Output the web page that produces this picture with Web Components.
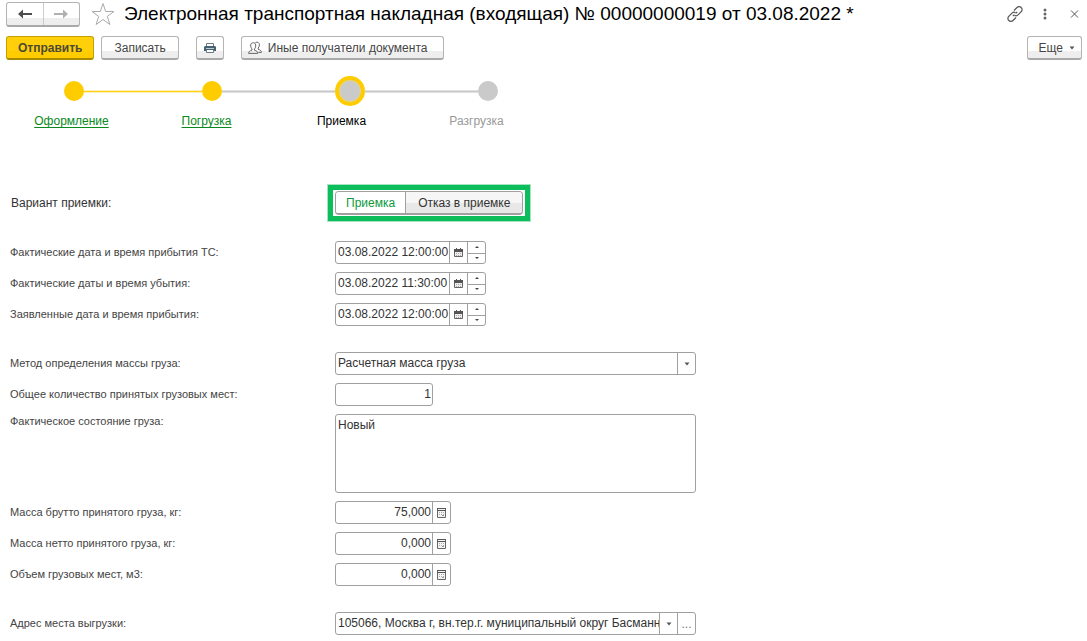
<!DOCTYPE html>
<html lang="ru">
<head>
<meta charset="utf-8">
<meta name="viewport" content="width=device-width, initial-scale=1">
<title>Электронная транспортная накладная</title>
<style>
  body { margin: 0; background: #fff; color: #333; font-family: "Liberation Sans", Arial, sans-serif; font-size: 12px; }
</style>
</head>
<body>
<waybill-page></waybill-page>
<script>
const define = (name, css, html) => {
  customElements.define(name, class extends HTMLElement {
    constructor() {
      super();
      const t = document.createElement('template');
      t.innerHTML = `<style>*{box-sizing:border-box}${css}</style>${typeof html === 'function' ? html(this) : html}`;
      this.attachShadow({ mode: 'open' }).append(t.content.cloneNode(true));
    }
  });
};

/* Toolbar button */
define('tool-button', `
  :host { display: block; }
  button { display: flex; align-items: center; justify-content: center; gap: 6px; height: 24px; min-width: 28px; padding: 0 12px;
    font: inherit; line-height: 20px; color: #444; white-space: nowrap; border: 1px solid #b4b4b4; border-bottom: 2px solid #a9a9a9;
    border-radius: 3px; background: linear-gradient(#fff 66%, #eee 66%); }
  :host([primary]) button { padding: 0 11px; font-weight: bold; color: #4c4a33; border-color: #c4a000; border-bottom-color: #a88a00; background: linear-gradient(#ffcf0a 66%, #fc0 66%); }
  :host([icon]) button { padding: 0 6px; }
  :host([lead]) button { padding: 0 16px 0 6px; }
  :host([menu]) button { padding: 0 6px 0 11px; }
`, el => `<button type="button" ${el.hasAttribute('name') ? `aria-label="${el.getAttribute('name')}"` : ''}><slot></slot></button>`);

/* Window caption: history buttons, star, title, window actions */
define('title-bar', `
  :host { display: flex; align-items: center; height: 28px; padding: 0 5px 0 6px; }
  .nav { display: flex; width: 74px; height: 25px; border: 1px solid #b4b4b4; border-bottom: 2px solid #a9a9a9; border-radius: 3px; background: linear-gradient(#fff 66%, #eee 66%); }
  button { display: grid; place-items: center; padding: 0; border: 0; background: none; color: #4d4d4d; }
  .nav button { flex: 1; }
  .nav button + button { border-left: 1px solid #ccc; color: #b0b0b0; }
  .star { margin: 0 9px 0 11px; }
  h1 { flex: 1; margin: 0; font-size: 19px; line-height: 24px; font-weight: normal; color: #000; white-space: nowrap; }
  .actions { display: flex; align-items: center; gap: 14px; }
`, `
  <div class="nav">
    <button type="button" aria-label="Назад"><svg width="16" height="12" viewBox="0 0 16 12"><path d="M1 6 6 1.500V5h9v2H6v3.500z" fill="currentColor"/></svg></button>
    <button type="button" aria-label="Вперед"><svg width="16" height="12" viewBox="0 0 16 12"><path d="M15 6 10 1.500V5H1v2h9v3.500z" fill="currentColor"/></svg></button>
  </div>
  <button class="star" type="button" aria-label="В избранное"><svg width="24" height="24" viewBox="0 0 24 24"><path d="m12 1.500 2.700 8h8.200l-6.600 4.900 2.600 8.100-6.900-5-6.900 5 2.600-8.100L1.100 9.500h8.200z" fill="none" stroke="#aaa"/></svg></button>
  <h1><slot></slot></h1>
  <div class="actions">
    <button type="button" aria-label="Ссылка"><svg width="18" height="18" viewBox="0 0 18 18" fill="none" stroke="#555" stroke-width="1.200"><path d="m8 5.500 3-3a2.900 2.900 0 0 1 4.200 0 2.900 2.900 0 0 1 0 4.200l-3.200 3.200a2.900 2.900 0 0 1-3.400.5M10 12.500l-3 3a2.900 2.900 0 0 1-4.200 0 2.900 2.900 0 0 1 0-4.200l3.200-3.200a2.900 2.900 0 0 1 3.400-.5M6.800 11.200l1.500-1.500M9.700 8.300l1.500-1.500"/></svg></button>
    <button type="button" aria-label="Меню"><svg width="14" height="14" viewBox="0 0 14 14" fill="#666"><circle cx="7" cy="3" r="1.500"/><circle cx="7" cy="7" r="1.500"/><circle cx="7" cy="11" r="1.500"/></svg></button>
    <button type="button" aria-label="Закрыть"><svg width="16" height="14" viewBox="0 0 16 14"><path d="m5 3.500 7 7m0-7-7 7" stroke="#555" fill="none"/></svg></button>
  </div>
`);

/* Stage tracker */
define('stage-track', `
  :host { display: block; }
  .marks { display: grid; grid-template-columns: repeat(4, 138px); align-items: center; margin: 0 0 0 5px; height: 30px; }
  .mark { display: grid; grid-template-columns: 1fr auto 1fr; align-items: center; }
  i { width: 20px; height: 20px; border-radius: 50%; background: #cacaca; }
  .done i { background: #fc0; }
  .current i { width: 30px; height: 30px; border: 4px solid #fc0; box-shadow: inset 0 0 0 1px #e6d48a; }
  .mark::before, .mark::after { content: ""; height: 3px; background: linear-gradient(#e0e0e0 33%, #c8c8c8 33% 66%, #e0e0e0 66%); }
  .first::before, .last::after { visibility: hidden; }
  .first::after, .second::before { background: linear-gradient(#fff0b3 33%, #ffcf1a 33% 66%, #fff0b3 66%); }
  ol { display: grid; grid-template-columns: repeat(4, 135px); margin: 7px 0 0 4px; padding: 0; list-style: none; text-align: center; line-height: 16px; }
  a { color: #0a8a1c; text-decoration: underline; text-underline-offset: 2px; }
  .now { color: #000; } .later { color: #999; }
`, `
  <div class="marks" aria-hidden="true">
    <div class="mark done first"><i></i></div><div class="mark done second"><i></i></div>
    <div class="mark current"><i></i></div><div class="mark last"><i></i></div>
  </div>
  <ol><li><a href="#draft">Оформление</a></li><li><a href="#loading">Погрузка</a></li><li class="now" aria-current="step">Приемка</li><li class="later">Разгрузка</li></ol>
`);

/* Acceptance switch with highlighted frame */
define('variant-switch', `
  :host { display: block; }
  fieldset { display: grid; grid-template-columns: 317px auto; justify-content: start; align-items: center; margin: 0; padding: 0 0 0 10px; border: 0; }
  .caption { line-height: 16px; padding-left: 1px; }
  .frame { border: 6px solid #0bbd5b; outline: 1px solid #a5e5c1; outline-offset: -1px; padding: 1px 2px; }
  .seg { display: flex; height: 24px; border: 1px solid #a0a0a0; border-bottom-width: 2px; border-radius: 4px; overflow: hidden; }
  label { display: grid; place-items: center; padding: 0 12px; background: linear-gradient(#f6f6f6 50%, #e8e8e8 50%); white-space: nowrap; }
  label + label { border-left: 1px solid #a0a0a0; }
  label:has(:checked) { background: #fff; color: #0a9a3c; padding: 0 10px; }
  input { appearance: none; position: absolute; width: 1px; height: 1px; margin: 0; }
`, `
  <fieldset aria-labelledby="c">
    <span class="caption" id="c">Вариант приемки:</span>
    <div class="frame"><div class="seg">
      <label><input type="radio" name="v" checked>Приемка</label>
      <label><input type="radio" name="v">Отказ в приемке</label>
    </div></div>
  </fieldset>
`);

/* Labelled form fields share one row layout */
const fieldCss = `
  :host { display: block; }
  .row { display: grid; grid-template-columns: 325px minmax(0, 361px); align-items: start; padding: 0 0 0 10px; }
  .row > label { font-size: 11px; line-height: 14px; padding: 4px 0; color: #444; }
  .box { display: flex; justify-self: start; height: 23px; border: 1px solid #a0a0a0; border-radius: 3px; background: #fff; overflow: hidden; }
  input, select, textarea { display: block; flex: 1; min-width: 0; width: 100%; margin: 0; padding: 0 2px; border: 0; outline: 0; background: none; color: #333; font: inherit; line-height: 21px; appearance: none; border-radius: 0; }
  button { display: grid; place-items: center; flex: none; width: 18px; margin: 0; padding: 0; border: 0; border-left: 1px solid #a0a0a0; background: none; color: #777; font: inherit; }
  svg { display: block; }
`;
const arrow = '<svg width="6" height="4" viewBox="0 0 6 4"><path d="M.500.500h5L3 3.500z" fill="#555"/></svg>';
const row = (el, control) => `<div class="row"><label for="f">${el.getAttribute('label')}</label>${control}</div>`;

define('date-field', fieldCss + `
  .box { width: 151px; }
  input { padding-right: 0; }
  .spin { display: grid; grid-template-rows: 1fr 1fr; width: 18px; border-left: 1px solid #a0a0a0; }
  .spin button { width: auto; border-left: 0; }
  .spin button + button { border-top: 1px solid #a0a0a0; }
`, el => row(el, `<div class="box"><input id="f" value="${el.getAttribute('value')}">
  <button type="button" aria-label="Календарь"><svg width="9" height="9" viewBox="0 0 9 9"><path d="M.5 2.500h8v6h-8z" fill="#eee" stroke="#666"/><path d="M0 1h9v3H0z" fill="#555"/><path d="M2 0h1v1H2zM6 0h1v1H6z" fill="#555"/><path d="M2 5.500h5M2 7.500h5" stroke="#aaa" stroke-dasharray="1 1"/></svg></button>
  <span class="spin"><button type="button" aria-label="Больше"><svg width="4" height="2" viewBox="0 0 4 2"><path d="M0 2h4L2 0z" fill="#444"/></svg></button><button type="button" aria-label="Меньше"><svg width="4" height="2" viewBox="0 0 4 2"><path d="M0 0h4L2 2z" fill="#444"/></svg></button></span></div>`));

define('number-field', fieldCss + `
  .box { width: 116px; }
  :host([plain]) .box { width: 98px; }
  :host([plain]) button { display: none; }
  input { text-align: right; padding-right: 1px; }
`, el => row(el, `<div class="box"><input id="f" inputmode="decimal" value="${el.getAttribute('value')}">
  <button type="button" aria-label="Калькулятор"><svg width="9" height="10" viewBox="0 0 9 10"><path d="M.5.5h8v9h-8z" fill="#f4f4f4" stroke="#666"/><path d="M0 0h9v1H0zM0 2h9v1H0z" fill="#555"/><path d="M2 4.500h5M2 6.500h5" stroke="#aaa" stroke-dasharray="1 1"/><path d="M5 7.500h2" stroke="#999"/></svg></button></div>`));

define('choice-field', fieldCss + `
  .box { display: grid; grid-template-columns: minmax(0, 1fr) 18px; justify-self: stretch; }
  select { grid-area: 1 / 1 / 2 / 3; height: 21px; }
  .mark { grid-area: 1 / 2; display: grid; place-items: center; border-left: 1px solid #a0a0a0; pointer-events: none; }
`, el => row(el, `<div class="box"><select id="f"><option>${el.getAttribute('value')}</option></select><span class="mark">${arrow}</span></div>`));

define('memo-field', fieldCss + `
  .row > label { padding: 0; }
  .box { height: 79px; justify-self: stretch; }
  textarea { height: 77px; padding-top: 2px; line-height: 16px; resize: none; }
`, el => row(el, `<div class="box"><textarea id="f">${el.getAttribute('value')}</textarea></div>`));

define('address-field', fieldCss + `
  .box { justify-self: stretch; }
  input { padding-right: 0; }
`, el => row(el, `<div class="box"><input id="f" value="${el.getAttribute('value')}"><button type="button" aria-label="Список">${arrow}</button><button type="button" aria-label="Выбрать">...</button></div>`));

define('field-group', `
  :host { display: flex; flex-direction: column; gap: 8px; }
`, '<slot></slot>');

define('waybill-page', `
  :host { display: block; }
  .tools { display: flex; gap: 17px; padding: 8px 5px 0 6px; }
  .pair { display: flex; gap: 7px; }
  .more { margin-left: auto; }
  svg { display: block; flex: none; }
  stage-track { margin-top: 16px; }
  variant-switch { margin-top: 55px; }
  form { display: flex; flex-direction: column; gap: 26px; margin: 19px 0 0; padding-bottom: 4px; }
`, `
  <header>
    <title-bar>Электронная транспортная накладная (входящая) № 00000000019 от 03.08.2022 *</title-bar>
    <div class="tools">
      <div class="pair"><tool-button primary>Отправить</tool-button><tool-button>Записать</tool-button></div>
      <tool-button icon name="Печать"><svg width="14" height="14" viewBox="0 0 14 14"><path d="M3.500 5V2.500h7V5M3.500 9v2.500h7V9" fill="#fff" stroke="#6b7b85"/><path d="M2 5h10l1 1v4h-2V9H3v1H1V6z" fill="#456172"/><path d="M3 7.500h8" stroke="#b9cad2"/></svg></tool-button>
      <tool-button lead><svg width="14" height="14" viewBox="0 0 14 14" fill="none" stroke="#666"><path d="M.6 12.400c0-2 1.200-2.500 3.400-3.200V8C2.900 6.900 2.600 5.500 2.700 4c.1-3 4.900-3 5 0 .1 1.500-.2 2.900-1.300 4v1.200c2.200.7 3.400 1.200 3.400 3.200z"/><path d="M7.500 1.500c1.800-1 4 .1 3.900 2.300 0 1.400-.4 2.300-1.200 3.200v1.300c2 .6 3.200 1.200 3.200 3.100h-3"/></svg><span>Иные получатели документа</span></tool-button>
      <tool-button menu class="more"><span>Еще</span>${arrow}</tool-button>
    </div>
  </header>
  <stage-track></stage-track>
  <variant-switch></variant-switch>
  <form>
    <field-group>
      <date-field label="Фактические дата и время прибытия ТС:" value="03.08.2022 12:00:00"></date-field>
      <date-field label="Фактические даты и время убытия:" value="03.08.2022 11:30:00"></date-field>
      <date-field label="Заявленные дата и время прибытия:" value="03.08.2022 12:00:00"></date-field>
    </field-group>
    <field-group>
      <choice-field label="Метод определения массы груза:" value="Расчетная масса груза"></choice-field>
      <number-field plain label="Общее количество принятых грузовых мест:" value="1"></number-field>
      <memo-field label="Фактическое состояние груза:" value="Новый"></memo-field>
      <number-field label="Масса брутто принятого груза, кг:" value="75,000"></number-field>
      <number-field label="Масса нетто принятого груза, кг:" value="0,000"></number-field>
      <number-field label="Объем грузовых мест, м3:" value="0,000"></number-field>
    </field-group>
    <field-group>
      <address-field label="Адрес места выгрузки:" value="105066, Москва г, вн.тер.г. муниципальный округ Басманный"></address-field>
    </field-group>
  </form>
`);
</script>
</body>
</html>
